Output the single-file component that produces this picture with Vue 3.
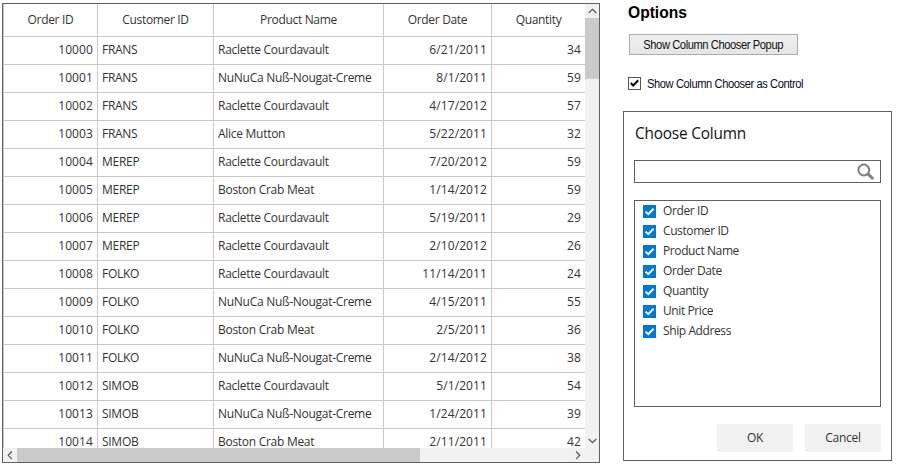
<script setup>
const headers = ['Order ID', 'Customer ID', 'Product Name', 'Order Date', 'Quantity']
const R = 'Raclette Courdavault'
const N = 'NuNuCa Nuß-Nougat-Creme'
const B = 'Boston Crab Meat'
const rows = [
  [10000, 'FRANS', R, '6/21/2011', 34],
  [10001, 'FRANS', N, '8/1/2011', 59],
  [10002, 'FRANS', R, '4/17/2012', 57],
  [10003, 'FRANS', 'Alice Mutton', '5/22/2011', 32],
  [10004, 'MEREP', R, '7/20/2012', 59],
  [10005, 'MEREP', B, '1/14/2012', 59],
  [10006, 'MEREP', R, '5/19/2011', 29],
  [10007, 'MEREP', R, '2/10/2012', 26],
  [10008, 'FOLKO', R, '11/14/2011', 24],
  [10009, 'FOLKO', N, '4/15/2011', 55],
  [10010, 'FOLKO', B, '2/5/2011', 36],
  [10011, 'FOLKO', N, '2/14/2012', 38],
  [10012, 'SIMOB', R, '5/1/2011', 54],
  [10013, 'SIMOB', N, '1/24/2011', 39],
  [10014, 'SIMOB', B, '2/11/2011', 42],
]
const numeric = [true, false, false, true, true]
const columns = ['Order ID', 'Customer ID', 'Product Name', 'Order Date', 'Quantity', 'Unit Price', 'Ship Address']
</script>

<template>
  <div class="page">
    <section class="grid">
      <div class="table">
        <div class="row head">
          <div v-for="h in headers" :key="h" class="cell"><span>{{ h }}</span></div>
        </div>
        <div v-for="r in rows" :key="r[0]" class="row">
          <div v-for="(c, i) in r" :key="i" class="cell" :class="{ num: numeric[i] }"><span>{{ c }}</span></div>
        </div>
      </div>
      <div class="vbar">
        <svg class="arrow" width="14" height="14"><path d="M3.7 9 L7.5 5.3 L11.3 9" /></svg>
        <div class="vthumb"></div>
        <svg class="arrow end" width="14" height="14"><path d="M3.7 5 L7.5 8.7 L11.3 5" /></svg>
      </div>
      <div class="hbar">
        <svg class="arrow" width="14" height="14"><path d="M8.8 3.5 L5.2 7.3 L8.8 11.1" /></svg>
        <div class="hthumb"></div>
        <svg class="arrow right" width="14" height="14"><path d="M5.2 3.5 L8.8 7.3 L5.2 11.1" /></svg>
      </div>
    </section>

    <aside class="side">
      <h2>Options</h2>
      <button class="popup"><span>Show Column Chooser Popup</span></button>
      <label class="toggle">
        <svg width="13" height="13"><rect x=".5" y=".5" width="12" height="12" fill="#fff" stroke="#555" /><path d="M2.8 6 L5.2 8.5 L10.2 3.3" fill="none" stroke="#000" stroke-width="2" /></svg>
        <span>Show Column Chooser as Control</span>
      </label>
      <div class="chooser">
        <h3>Choose Column</h3>
        <div class="search">
          <svg width="18" height="18" fill="none" stroke="#808080"><circle cx="6.8" cy="7" r="5.4" stroke-width="2" /><path d="M10.6 10.6 L16.2 16" stroke-width="3" /></svg>
        </div>
        <div class="list">
          <div v-for="c in columns" :key="c" class="item">
            <svg width="13" height="13"><rect width="13" height="13" fill="#0078d7" /><path d="M2.6 6.6 L5.2 9.2 L10.6 3.8" fill="none" stroke="#fff" stroke-width="2" /></svg>
            <span>{{ c }}</span>
          </div>
        </div>
        <div class="actions">
          <button>OK</button>
          <button>Cancel</button>
        </div>
      </div>
    </aside>
  </div>
</template>

<style>
body { margin: 0; background: #fff; }
</style>

<style scoped>
* { box-sizing: border-box; }
.page {
  display: flex;
  width: 905px;
  height: 466px;
  padding: 3px 0 0 2px;
  font: 12px/16px "Open Sans", "Noto Sans", sans-serif;
  color: #333;
  overflow: hidden;
}
.grid {
  display: grid;
  grid-template: 444px 14px / 582px 14px;
  width: 598px;
  height: 460px;
  border: 1px solid #606164;
}
.table { overflow: hidden; border-left: 1px solid #c8c8c8; }
.row { display: grid; grid-template-columns: 94px 116px 170px 108px 93px; height: 28px; }
.row.head { height: 33px; }
.cell {
  display: flex;
  align-items: center;
  padding: 0 5px 1px 4px;
  border-right: 1px solid #c8c8c8;
  border-bottom: 1px solid #c8c8c8;
  white-space: nowrap;
  letter-spacing: -0.28px;
}
.cell.num { justify-content: flex-end; padding-right: 4px; letter-spacing: 0.1px; }
.cell:last-child { border-right: 0; }
.head .cell { justify-content: center; padding: 0; letter-spacing: -0.33px; }
.vbar { display: flex; flex-direction: column; background: #f1f1f1; }
.vthumb { height: 61px; background: #cacaca; }
.end { margin-top: auto; }
.hbar { grid-column: 1 / 3; display: flex; background: #f1f1f1; }
.hthumb { width: 403px; background: #cacaca; }
.right { margin-left: auto; margin-right: 14px; }
.arrow { display: block; flex: none; fill: none; stroke: #505050; stroke-width: 1.1; }

.side { width: 269px; margin-left: 23px; }
h2 {
  margin: 0 0 0 5px;
  height: 31px;
  font: bold 15.6px/20px "Liberation Sans", Arial, sans-serif;
  color: #000;
}
button { padding: 0; border: 0; font: inherit; color: inherit; }
.popup {
  display: block;
  width: 169px;
  height: 21px;
  margin-left: 6px;
  border: 1px solid #acacac;
  background: linear-gradient(#f0f0f0, #e5e5e5);
  font: 12px/19px "Liberation Sans", Arial, sans-serif;
  letter-spacing: -0.45px;
  color: #111;
}
.popup span { display: inline-block; padding: 1px 1px 0 0; line-height: 18px; transform: scaleX(0.93); }
.toggle {
  display: flex;
  align-items: center;
  gap: 6px;
  height: 13px;
  margin: 22px 0 21px 5px;
  font: 12px/13px "Liberation Sans", Arial, sans-serif;
  letter-spacing: -0.45px;
  color: #0a0a28;
  white-space: nowrap;
}
.toggle span { padding-top: 1px; transform: scaleX(0.93); transform-origin: 0 50%; }
.chooser {
  width: 269px;
  height: 350px;
  padding: 10px;
  border: 1px solid #606164;
}
h3 { margin: 0; height: 38px; padding: 1px 0 0 1px; font: 15.4px/22px "Open Sans", "Noto Sans", sans-serif; letter-spacing: -0.2px; color: #111; }
.search {
  display: flex;
  justify-content: flex-end;
  height: 23px;
  padding: 2px 5px 0 0;
  border: 1px solid #606164;
}
.list { height: 207px; margin-top: 17px; padding: 0 8px; border: 1px solid #606164; }
.item { display: flex; align-items: flex-start; gap: 7px; height: 20px; letter-spacing: -0.4px; }
.item svg { margin-top: 4px; }
.item span { line-height: 20px; }
.actions { display: flex; justify-content: flex-end; gap: 12px; margin-top: 17px; }
.actions button { width: 76px; height: 28px; padding-bottom: 1px; letter-spacing: -0.25px; background: #f1f1f1; }
</style>
